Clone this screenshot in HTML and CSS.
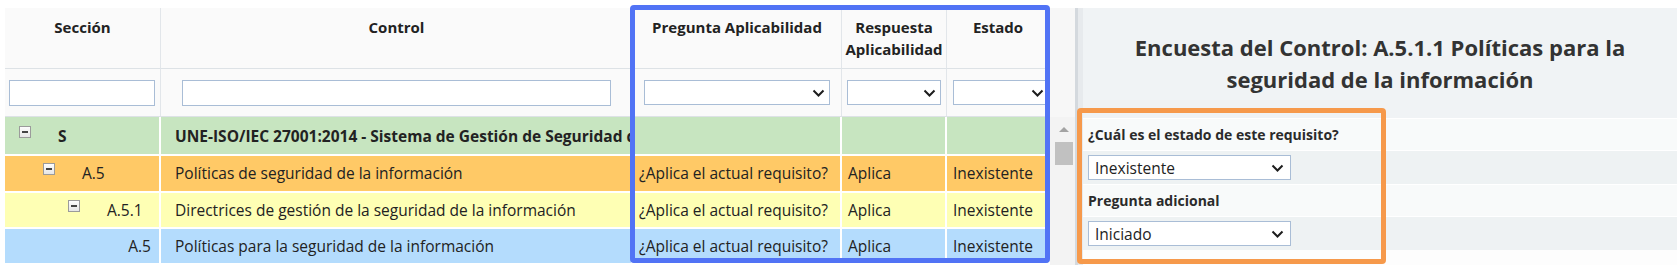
FILE: index.html
```html
<!DOCTYPE html>
<html lang="es">
<head>
    <meta charset="UTF-8">
    <title>Encuesta del Control</title>
    <link rel="stylesheet" href="styles.css">
</head>
<body>
    <div class="page">
        <div class="grid-pane">
            <table class="tree-grid">
                <colgroup>
                    <col class="col-seccion">
                    <col class="col-control">
                    <col class="col-pregunta">
                    <col class="col-respuesta">
                    <col class="col-estado">
                </colgroup>
                <thead>
                    <tr class="head-row">
                        <th>Sección</th>
                        <th>Control</th>
                        <th>Pregunta Aplicabilidad</th>
                        <th>Respuesta<br>Aplicabilidad</th>
                        <th>Estado</th>
                    </tr>
                    <tr class="filter-row">
                        <td><div class="text-filter filter-seccion"></div></td>
                        <td><div class="text-filter filter-control"></div></td>
                        <td>
                            <div class="select-filter filter-pregunta">
                                <svg width="13" height="8" viewBox="0 0 13 8"><path d="M1.5 1.5l5 5 5-5" fill="none" stroke="#1d1d1d" stroke-width="2"/></svg>
                            </div>
                        </td>
                        <td>
                            <div class="select-filter filter-respuesta">
                                <svg width="13" height="8" viewBox="0 0 13 8"><path d="M1.5 1.5l5 5 5-5" fill="none" stroke="#1d1d1d" stroke-width="2"/></svg>
                            </div>
                        </td>
                        <td>
                            <div class="select-filter filter-estado">
                                <svg width="13" height="8" viewBox="0 0 13 8"><path d="M1.5 1.5l5 5 5-5" fill="none" stroke="#1d1d1d" stroke-width="2"/></svg>
                            </div>
                        </td>
                    </tr>
                </thead>
                <tbody>
                    <tr class="lvl-0">
                        <td><div class="tree-cell"><span class="toggle"></span><b>S</b></div></td>
                        <td class="control-cell"><b>UNE-ISO/IEC 27001:2014 - Sistema de Gestión de Seguridad de la Información</b></td>
                        <td></td>
                        <td></td>
                        <td></td>
                    </tr>
                    <tr class="lvl-1">
                        <td><div class="tree-cell"><span class="toggle"></span>A.5</div></td>
                        <td class="control-cell">Políticas de seguridad de la información</td>
                        <td>¿Aplica el actual requisito?</td>
                        <td>Aplica</td>
                        <td>Inexistente</td>
                    </tr>
                    <tr class="lvl-2">
                        <td><div class="tree-cell"><span class="toggle"></span>A.5.1</div></td>
                        <td class="control-cell">Directrices de gestión de la seguridad de la información</td>
                        <td>¿Aplica el actual requisito?</td>
                        <td>Aplica</td>
                        <td>Inexistente</td>
                    </tr>
                    <tr class="lvl-3">
                        <td><div class="tree-cell">A.5</div></td>
                        <td class="control-cell">Políticas para la seguridad de la información</td>
                        <td>¿Aplica el actual requisito?</td>
                        <td>Aplica</td>
                        <td>Inexistente</td>
                    </tr>
                </tbody>
            </table>

            <div class="vscroll">
                <div class="vscroll-head"></div>
                <div class="vscroll-track">
                    <span class="vscroll-up"></span>
                    <span class="vscroll-thumb"></span>
                </div>
            </div>
        </div>

        <div class="splitter"></div>

        <div class="survey">
            <h2 class="survey-title">Encuesta del Control: A.5.1.1 Políticas para la seguridad de la información</h2>
            <div class="survey-row row-label">¿Cuál es el estado de este requisito?</div>
            <div class="survey-row row-field">
                <div class="survey-select">
                    <span>Inexistente</span>
                    <svg width="13" height="8" viewBox="0 0 13 8"><path d="M1.5 1.5l5 5 5-5" fill="none" stroke="#1d1d1d" stroke-width="2"/></svg>
                </div>
            </div>
            <div class="survey-row row-label">Pregunta adicional</div>
            <div class="survey-row row-field">
                <div class="survey-select">
                    <span>Iniciado</span>
                    <svg width="13" height="8" viewBox="0 0 13 8"><path d="M1.5 1.5l5 5 5-5" fill="none" stroke="#1d1d1d" stroke-width="2"/></svg>
                </div>
            </div>
            <div class="survey-rest"></div>
        </div>

        <!-- recuadros de resaltado -->
        <div class="focus-box focus-blue"></div>
        <div class="focus-box focus-orange"></div>
    </div>
</body>
</html>
```

FILE: styles.css
```css
* {
    box-sizing: border-box;
}

body {
    margin: 0;
    font-family: 'Open Sans', 'Liberation Sans', sans-serif;
    color: #222;
    background-color: #fff;
}

.page {
    position: relative;
    display: flex;
    height: 265px;
    padding-top: 8px;
    overflow: hidden;
}

/* ---- tabla ---- */
.grid-pane {
    display: flex;
    padding-left: 5px;
    flex: 0 0 1075px;
}

.tree-grid {
    table-layout: fixed;
    width: 1045px;
    border-collapse: separate;
    border-spacing: 0;
    font-size: 15.5px;
}

.col-seccion { width: 156px; }
.col-control { width: 472px; }
.col-pregunta { width: 209px; }
.col-respuesta { width: 105px; }
.col-estado { width: 103px; }

.head-row th {
    height: 61px;
    padding: 8px 2px 0;
    vertical-align: top;
    font-size: 15px;
    font-weight: 700;
    line-height: 22px;
    color: #222;
    background-color: #fafafa;
    border-right: 1px solid #e2e6ea;
    border-bottom: 1px solid #dde2e6;
}

.filter-row td {
    height: 48px;
    padding: 0;
    background-color: #fafafa;
    border-right: 1px solid #e2e6ea;
    border-bottom: 1px solid #dde2e6;
}

.text-filter,
.select-filter {
    height: 26px;
    background-color: #fff;
    border: 1px solid #a9bdd6;
}

.select-filter {
    height: 25px;
    display: flex;
    align-items: center;
    justify-content: flex-end;
    padding-right: 4px;
}

.filter-seccion { width: 146px; margin-left: 4px; }
.filter-control { width: 429px; margin-left: 21px; }
.filter-pregunta { width: 186px; margin-left: 11px; }
.filter-respuesta { width: 94px; margin-left: 5px; }
.filter-estado { width: 96px; margin-left: 6px; }

tbody td {
    height: 34px;
    padding: 0 6px;
    white-space: nowrap;
    overflow: hidden;
    border-right: 2px solid #fff;
    border-bottom: 2px solid #fff;
}

tbody tr.lvl-0 td { height: 37px; background-color: #c7e5c0; }
tbody tr.lvl-1 td { background-color: #ffc966; }
tbody tr.lvl-2 td { background-color: #feffb4; }
tbody tr.lvl-3 td { background-color: #b4dcfd; }

tbody td.control-cell {
    padding-left: 14px;
}

.tree-cell {
    display: flex;
    align-items: center;
    gap: 27px;
}

.lvl-0 .tree-cell { padding-left: 8px; }
.lvl-1 .tree-cell { padding-left: 32px; }
.lvl-2 .tree-cell { padding-left: 57px; }
.lvl-3 .tree-cell {
    justify-content: flex-end;
    padding-right: 2px;
}

.toggle {
    position: relative;
    flex: 0 0 12px;
    height: 12px;
    margin-top: -8px;
    border: 1px solid #9b9b9b;
    background: linear-gradient(#fdfdfd, #e6e6e6);
}

.toggle::after {
    content: "";
    position: absolute;
    left: 2px;
    right: 2px;
    top: 4px;
    height: 2px;
    background-color: #444;
}

/* ---- barra de scroll ---- */
.vscroll {
    width: 25px;
    display: flex;
    flex-direction: column;
}

.vscroll-head {
    height: 109px;
    background-color: #f7f7f7;
}

.vscroll-track {
    flex: 1;
    position: relative;
    background-color: #f3f3f3;
    padding: 10px 2px 0 5px;
}

.vscroll-up {
    display: block;
    width: 0;
    height: 0;
    margin: 0 auto;
    border-left: 5px solid transparent;
    border-right: 5px solid transparent;
    border-bottom: 5px solid #a3a3a3;
}

.vscroll-thumb {
    display: block;
    height: 23px;
    margin-top: 10px;
    background-color: #c1c1c1;
}

.splitter {
    flex: 0 0 8px;
    background-color: #e7eaed;
    border-left: 3px solid #d4d9de;
}

/* ---- encuesta ---- */
.survey {
    flex: 1;
    display: flex;
    flex-direction: column;
}

.survey-title {
    margin: 0;
    height: 110px;
    padding: 23px 20px;
    font-size: 22px;
    font-weight: 700;
    line-height: 32px;
    text-align: center;
    color: #333;
    background-color: #f0f3f5;
}

.survey-row {
    display: flex;
    align-items: center;
    padding-left: 5px;
}

.row-label {
    height: 32px;
    font-size: 14px;
    font-weight: 700;
    color: #2b2b2b;
    background-color: #f8fafa;
    border-top: 1px solid #fff;
}

.row-field {
    height: 34px;
    background-color: #eef2f3;
    border-top: 1px solid #fff;
}

.survey-select {
    width: 203px;
    height: 25px;
    display: flex;
    align-items: center;
    justify-content: space-between;
    padding: 0 6px;
    font-size: 15.5px;
    background-color: #fff;
    border: 1px solid #a9bdd6;
}

.survey-rest {
    flex: 1;
    background-color: #fdfdfd;
}

/* ---- resaltado ---- */
.focus-box {
    position: absolute;
    border: 5px solid;
    border-radius: 4px;
    pointer-events: none;
}

.focus-blue {
    left: 630px;
    top: 5px;
    width: 420px;
    height: 258px;
    border-color: #5173f5;
}

.focus-orange {
    left: 1077px;
    top: 108px;
    width: 309px;
    height: 156px;
    border-color: #f6994b;
}
```
